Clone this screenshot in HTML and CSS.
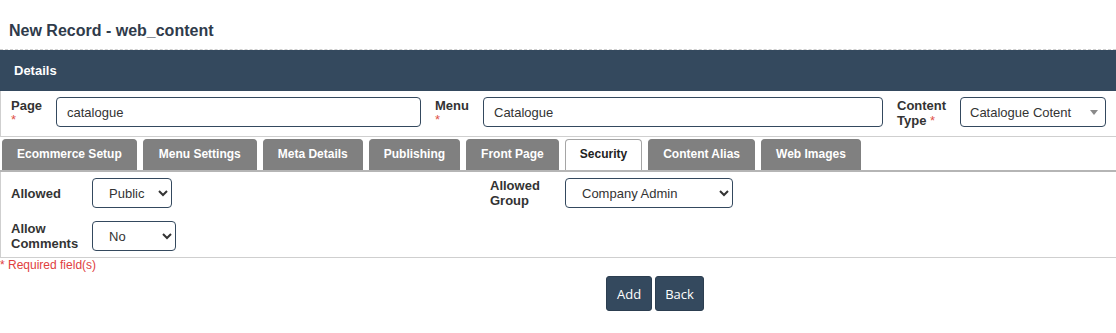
FILE: index.html
```html
<!DOCTYPE html>
<html>
<head>
<meta charset="utf-8">
<link rel="stylesheet" href="styles.css">
</head>
<body>
<h1 class="title">New Record - web_content</h1>
<div class="panel">
  <div class="panel-head">Details</div>
  <div class="fields">
    <label class="lbl lbl-page">Page<span class="req req-block">*</span></label>
    <input class="txt txt-page" type="text" value="catalogue">
    <label class="lbl lbl-menu">Menu<span class="req req-block">*</span></label>
    <input class="txt txt-menu" type="text" value="Catalogue">
    <label class="lbl lbl-ctype">Content<br>Type <span class="req">*</span></label>
    <div class="fake-select">
      <span>Catalogue Cotent</span>
      <span class="tri"></span>
    </div>
  </div>
  <div class="tabs">
    <div class="tab">Ecommerce Setup</div>
    <div class="tab tab-wide">Menu Settings</div>
    <div class="tab">Meta Details</div>
    <div class="tab">Publishing</div>
    <div class="tab">Front Page</div>
    <div class="tab active">Security</div>
    <div class="tab">Content Alias</div>
    <div class="tab">Web Images</div>
  </div>
  <div class="tab-body">
    <label class="lbl2">Allowed</label>
    <div class="cell">
      <select class="sel sel-public"><option>Public</option></select>
    </div>
    <label class="lbl2">Allowed Group</label>
    <div class="cell">
      <select class="sel sel-group"><option>Company Admin</option></select>
    </div>
    <label class="lbl2">Allow Comments</label>
    <div class="cell">
      <select class="sel sel-no"><option>No</option></select>
    </div>
  </div>
</div>
<div class="required">* Required field(s)</div>
<div class="actions">
  <button class="btn btn-add">Add</button>
  <button class="btn">Back</button>
</div>
</body>
</html>
```
FILE: styles.css
```css
* { box-sizing: border-box; }
body {
  margin: 0;
  font-family: "Liberation Sans", Arial, sans-serif;
  color: #333;
  background: #fff;
}
.title {
  margin: 0;
  padding: 22px 9px 9px;
  font-size: 16px;
  line-height: 18px;
  font-weight: bold;
  color: #2f3b4b;
}
.panel {
  border-top: 1px dashed #cfcfcf;
}
.panel-head {
  height: 41px;
  line-height: 41px;
  background: #34495e;
  color: #fff;
  font-size: 13px;
  font-weight: bold;
  padding-left: 14px;
}
.fields {
  display: flex;
  align-items: flex-start;
  border-left: 1px solid #cfcfcf;
  border-bottom: 1px solid #cfcfcf;
  padding: 6px 10px 8px 10px;
}
.lbl {
  font-size: 13px;
  line-height: 15px;
  font-weight: bold;
  color: #333;
  margin-top: 1px;
}
.req { color: #e0524a; font-weight: normal; }
.req-block { display: block; line-height: 13px; }
.lbl-page { width: 45px; }
.lbl-menu { width: 48px; margin-left: 14px; }
.lbl-ctype { width: 63px; margin-left: 14px; }
.txt {
  height: 30px;
  border: 1px solid #34495e;
  border-radius: 4px;
  padding: 0 10px;
  font-family: "Liberation Sans", Arial, sans-serif;
  font-size: 13px;
  color: #333;
  background: #fff;
  outline: none;
}
.txt-page { width: 365px; }
.txt-menu { width: 400px; }
.fake-select {
  width: 146px;
  height: 30px;
  border: 1px solid #34495e;
  border-radius: 4px;
  display: flex;
  align-items: center;
  justify-content: space-between;
  padding: 0 7px 0 9px;
  font-size: 13px;
  color: #333;
}
.tri {
  width: 0;
  height: 0;
  border-left: 4px solid transparent;
  border-right: 4px solid transparent;
  border-top: 5px solid #8a8a8a;
}
.tabs {
  display: flex;
  gap: 6px;
  margin-top: 2px;
  padding-left: 2px;
  border-bottom: 2px solid #b5b5b5;
}
.tab {
  height: 31px;
  line-height: 29px;
  padding: 0 14px;
  background: #808080;
  border: 1px solid #808080;
  border-bottom: none;
  border-radius: 4px 4px 0 0;
  color: #fff;
  font-size: 12px;
  font-weight: bold;
}
.tab-wide { padding: 0 15px; }
.tab.active {
  background: #fff;
  border-color: #a5a5a5;
  color: #222;
}
.tab-body {
  display: grid;
  grid-template-columns: 81px 398px 75px auto;
  grid-template-rows: 30px 30px;
  row-gap: 13px;
  align-items: center;
  border-left: 1px solid #cfcfcf;
  border-bottom: 1px solid #cfcfcf;
  padding: 6px 10px 6px 10px;
}
.lbl2 {
  font-size: 13px;
  line-height: 15px;
  font-weight: bold;
  color: #333;
}
.sel {
  height: 30px;
  border: 1px solid #34495e;
  border-radius: 4px;
  background: #fff;
  font-family: "Liberation Sans", Arial, sans-serif;
  font-size: 13px;
  color: #333;
  padding: 0 0 0 12px;
}
.sel-public { width: 80px; }
.sel-no { width: 84px; }
.sel-group { width: 168px; }
.required {
  margin-top: 0;
  font-size: 12px;
  line-height: 14px;
  color: #e0403e;
}
.actions {
  display: flex;
  gap: 3px;
  padding-left: 606px;
  margin-top: 4px;
}
.btn {
  height: 35px;
  padding: 0 9px;
  border: 1px solid #2c3e50;
  border-radius: 3px;
  background: #34495e;
  color: #fff;
  font-family: "Open Sans", "Noto Sans", sans-serif;
  font-size: 13px;
  font-weight: 500;
}
.btn-add { padding: 0 10px; }
```
